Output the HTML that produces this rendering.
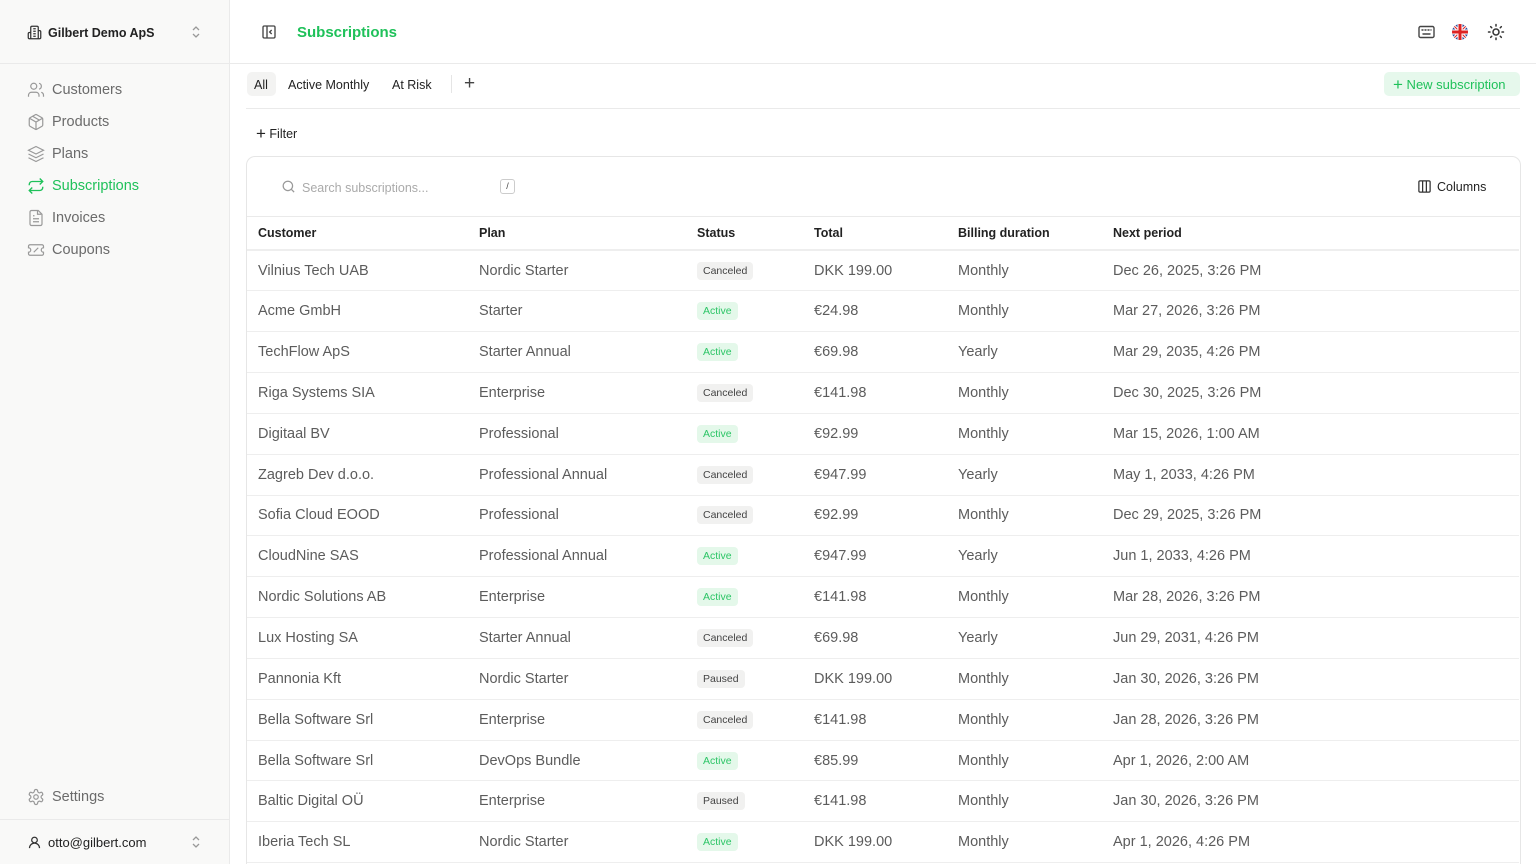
<!DOCTYPE html>
<html><head><meta charset="utf-8"><style>
*{box-sizing:border-box;margin:0;padding:0}
html,body{width:1536px;height:864px;overflow:hidden}
body{font-family:"Liberation Sans",sans-serif;background:#fff;color:#333}
#w{position:relative;width:1536px;height:864px;overflow:hidden}
.sb{position:absolute;left:0;top:0;width:230px;height:864px;background:#f9f9f8;border-right:1px solid #eaeaea}
.abs{position:absolute}
.nav{position:absolute;left:27px;display:flex;align-items:center;font-size:14.5px;color:#6b6b6b}
.nav svg{margin-right:7px}
.hr{position:absolute;height:1px;background:#eaeaea}
.g{color:#1fc15a}
table{border-collapse:collapse;position:absolute;left:247px;top:217px;width:1272px;font-size:14.5px;color:#5c5c5c}
th{font-weight:bold;font-size:12.5px;color:#222;text-align:left;height:33px;padding-left:11px;border-bottom:2px solid #eee}
td{height:40.85px;padding-left:11px;border-bottom:1px solid #eee;white-space:nowrap}
.b{display:inline-block;font-size:10.5px;padding:3px 6px;border-radius:4px;background:#f1f1f0;color:#444}
.a{background:#e4f8ea;color:#2cc566}
</style></head><body><div id="w">
<div class="sb">
 <div class="abs" style="left:27px;top:25px;display:flex;align-items:center;font-size:12.5px;font-weight:bold;color:#222">
  <svg width="15" height="15" viewBox="0 0 24 24" fill="none" stroke="#333" stroke-width="2"><path d="M6 22V4a2 2 0 0 1 2-2h8a2 2 0 0 1 2 2v18ZM6 12H4a2 2 0 0 0-2 2v6a2 2 0 0 0 2 2h2M18 9h2a2 2 0 0 1 2 2v9a2 2 0 0 1-2 2h-2M10 6h4M10 10h4M10 14h4M10 18h4"/></svg>
  <span style="margin-left:6px">Gilbert Demo ApS</span></div>
 <svg class="abs" style="left:190px;top:25px" width="12" height="14" viewBox="0 0 12 14" fill="none" stroke="#999" stroke-width="1.3"><path d="M3 5l3-3 3 3M3 9l3 3 3-3"/></svg>
 <div class="hr" style="left:0;top:63px;width:230px"></div>
 <div class="nav" style="top:81px"><svg width="18" height="18" viewBox="0 0 24 24" fill="none" stroke="#999" stroke-width="1.6"><circle cx="9" cy="7" r="4"/><path d="M2 21v-2a4 4 0 0 1 4-4h6a4 4 0 0 1 4 4v2M16 3.1a4 4 0 0 1 0 7.8M22 21v-2a4 4 0 0 0-3-3.9"/></svg>Customers</div>
 <div class="nav" style="top:113px"><svg width="18" height="18" viewBox="0 0 24 24" fill="none" stroke="#999" stroke-width="1.6"><path d="M21 8a2 2 0 0 0-1-1.7l-7-4a2 2 0 0 0-2 0l-7 4A2 2 0 0 0 3 8v8a2 2 0 0 0 1 1.7l7 4a2 2 0 0 0 2 0l7-4a2 2 0 0 0 1-1.7ZM3.3 7 12 12l8.7-5M12 22V12M7.5 4.3l9 5.2"/></svg>Products</div>
 <div class="nav" style="top:145px"><svg width="18" height="18" viewBox="0 0 24 24" fill="none" stroke="#999" stroke-width="1.6"><path d="M12 2 2 7l10 5 10-5zM2 12l10 5 10-5M2 17l10 5 10-5"/></svg>Plans</div>
 <div class="nav g" style="top:177px;color:#1fc15a"><svg width="18" height="18" viewBox="0 0 24 24" fill="none" stroke="#1fc15a" stroke-width="1.8"><path d="m17 2 4 4-4 4M3 11v-1a4 4 0 0 1 4-4h14M7 22l-4-4 4-4M21 13v1a4 4 0 0 1-4 4H3"/></svg>Subscriptions</div>
 <div class="nav" style="top:209px"><svg width="18" height="18" viewBox="0 0 24 24" fill="none" stroke="#999" stroke-width="1.6"><path d="M15 2H6a2 2 0 0 0-2 2v16a2 2 0 0 0 2 2h12a2 2 0 0 0 2-2V7zM14 2v5h5M8 13h8M8 17h8M8 9h2"/></svg>Invoices</div>
 <div class="nav" style="top:241px"><svg width="18" height="18" viewBox="0 0 24 24" fill="none" stroke="#999" stroke-width="1.6"><path d="M2 9a3 3 0 0 1 0 6v2a2 2 0 0 0 2 2h16a2 2 0 0 0 2-2v-2a3 3 0 0 1 0-6V7a2 2 0 0 0-2-2H4a2 2 0 0 0-2 2ZM9 9h.01M15 9l-6 6M15 15h.01"/></svg>Coupons</div>
 <div class="nav" style="top:788px"><svg width="18" height="18" viewBox="0 0 24 24" fill="none" stroke="#999" stroke-width="1.6"><path d="M12.2 2h-.4a2 2 0 0 0-2 2v.2a2 2 0 0 1-1 1.7l-.4.3a2 2 0 0 1-2 0l-.2-.1a2 2 0 0 0-2.7.7l-.2.4a2 2 0 0 0 .7 2.7l.2.1a2 2 0 0 1 1 1.7v.5a2 2 0 0 1-1 1.8l-.2.1a2 2 0 0 0-.7 2.7l.2.4a2 2 0 0 0 2.7.7l.2-.1a2 2 0 0 1 2 0l.4.3a2 2 0 0 1 1 1.7v.2a2 2 0 0 0 2 2h.4a2 2 0 0 0 2-2v-.2a2 2 0 0 1 1-1.7l.4-.3a2 2 0 0 1 2 0l.2.1a2 2 0 0 0 2.7-.7l.2-.4a2 2 0 0 0-.7-2.7l-.2-.1a2 2 0 0 1-1-1.8v-.5a2 2 0 0 1 1-1.7l.2-.1a2 2 0 0 0 .7-2.7l-.2-.4a2 2 0 0 0-2.7-.7l-.2.1a2 2 0 0 1-2 0l-.4-.3a2 2 0 0 1-1-1.7V4a2 2 0 0 0-2-2z"/><circle cx="12" cy="12" r="3"/></svg>Settings</div>
 <div class="hr" style="left:0;top:819px;width:230px"></div>
 <div class="abs" style="left:27px;top:835px;display:flex;align-items:center;font-size:13px;color:#222">
  <svg width="15" height="15" viewBox="0 0 24 24" fill="none" stroke="#333" stroke-width="2"><circle cx="12" cy="8" r="4.5"/><path d="M4 21a8 8 0 0 1 16 0"/></svg><span style="margin-left:6px">otto@gilbert.com</span></div>
 <svg class="abs" style="left:190px;top:835px" width="12" height="14" viewBox="0 0 12 14" fill="none" stroke="#999" stroke-width="1.3"><path d="M3 5l3-3 3 3M3 9l3 3 3-3"/></svg>
</div>
<svg class="abs" style="left:261px;top:24px" width="16" height="16" viewBox="0 0 24 24" fill="none" stroke="#444" stroke-width="2"><rect x="3" y="3" width="18" height="18" rx="2"/><path d="M9 3v18M16 15l-3-3 3-3"/></svg>
<div class="abs g" style="left:297px;top:24px;font-size:15px;font-weight:bold">Subscriptions</div>
<svg class="abs" style="left:1418px;top:25px" width="17" height="14" viewBox="0 0 17 14" fill="none" stroke="#444" stroke-width="1.4"><rect x="1" y="1.5" width="15" height="11" rx="1.5"/><path d="M4 5h1M7 5h1M10 5h1M13 5h0M5 9h7" stroke-linecap="round"/></svg>
<svg class="abs" style="left:1452px;top:24px" width="16" height="16" viewBox="0 0 16 16"><clipPath id="c"><circle cx="8" cy="8" r="8"/></clipPath><g clip-path="url(#c)"><rect width="16" height="16" fill="#2a4a9a"/><path d="M0 0L16 16M16 0L0 16" stroke="#fff" stroke-width="3"/><path d="M0 0L16 16M16 0L0 16" stroke="#d22" stroke-width="1"/><path d="M8 0v16M0 8h16" stroke="#fff" stroke-width="5"/><path d="M8 0v16M0 8h16" stroke="#d22" stroke-width="3"/></g></svg>
<svg class="abs" style="left:1487px;top:23px" width="18" height="18" viewBox="0 0 24 24" fill="none" stroke="#333" stroke-width="2" stroke-linecap="round"><circle cx="12" cy="12" r="4"/><path d="M12 2v2M12 20v2M4.9 4.9l1.4 1.4M17.7 17.7l1.4 1.4M2 12h2M20 12h2M6.3 17.7l-1.4 1.4M19.1 4.9l-1.4 1.4"/></svg>
<div class="hr" style="left:230px;top:63px;width:1306px"></div>
<div class="abs" style="left:247px;top:72px;width:29px;height:24px;background:#f3f3f2;border-radius:5px"></div>
<div class="abs" style="left:254px;top:78px;font-size:12.5px;color:#222">All</div>
<div class="abs" style="left:288px;top:78px;font-size:12.5px;color:#222">Active Monthly</div>
<div class="abs" style="left:392px;top:78px;font-size:12.5px;color:#222">At Risk</div>
<div class="abs" style="left:451px;top:75px;width:1px;height:18px;background:#e5e5e5"></div>
<div class="abs" style="left:464px;top:73px;font-size:19px;color:#444">+</div>
<div class="abs" style="left:1384px;top:72px;width:136px;height:24px;background:#e6f8ec;border-radius:5px;color:#1fc15a;font-size:13px;padding:5px 0 0 9px"><span style="font-size:17px;line-height:13px;vertical-align:-1px">+</span> New subscription</div>
<div class="hr" style="left:246px;top:108px;width:1274px"></div>
<div class="abs" style="left:256px;top:124px;font-size:12.5px;color:#222"><span style="font-size:17px;vertical-align:-1px">+</span> Filter</div>
<div class="abs" style="left:246px;top:156px;width:1275px;height:708px;border:1px solid #e6e6e6;border-bottom:none;border-radius:9px 9px 0 0"></div>
<svg class="abs" style="left:281px;top:179px" width="15" height="15" viewBox="0 0 24 24" fill="none" stroke="#999" stroke-width="2"><circle cx="11" cy="11" r="7.5"/><path d="m21 21-4.3-4.3"/></svg>
<div class="abs" style="left:302px;top:181px;font-size:12.5px;color:#aaa">Search subscriptions...</div>
<div class="abs" style="left:500px;top:179px;width:15px;height:15px;border:1px solid #ccc;border-radius:3px;font-size:9px;text-align:center;line-height:13px;color:#444">/</div>
<svg class="abs" style="left:1417px;top:179px" width="15" height="15" viewBox="0 0 24 24" fill="none" stroke="#333" stroke-width="2"><rect x="3" y="3" width="18" height="18" rx="2"/><path d="M9 3v18M15 3v18"/></svg>
<div class="abs" style="left:1437px;top:180px;font-size:12.5px;color:#222">Columns</div>
<div class="hr" style="left:247px;top:216px;width:1273px"></div>
<table>
<tr><th style="width:221px">Customer</th><th style="width:218px">Plan</th><th style="width:117px">Status</th><th style="width:144px">Total</th><th style="width:155px">Billing duration</th><th>Next period</th></tr>
<tr><td>Vilnius Tech UAB</td><td>Nordic Starter</td><td><span class="b">Canceled</span></td><td>DKK 199.00</td><td>Monthly</td><td>Dec 26, 2025, 3:26 PM</td></tr>
<tr><td>Acme GmbH</td><td>Starter</td><td><span class="b a">Active</span></td><td>€24.98</td><td>Monthly</td><td>Mar 27, 2026, 3:26 PM</td></tr>
<tr><td>TechFlow ApS</td><td>Starter Annual</td><td><span class="b a">Active</span></td><td>€69.98</td><td>Yearly</td><td>Mar 29, 2035, 4:26 PM</td></tr>
<tr><td>Riga Systems SIA</td><td>Enterprise</td><td><span class="b">Canceled</span></td><td>€141.98</td><td>Monthly</td><td>Dec 30, 2025, 3:26 PM</td></tr>
<tr><td>Digitaal BV</td><td>Professional</td><td><span class="b a">Active</span></td><td>€92.99</td><td>Monthly</td><td>Mar 15, 2026, 1:00 AM</td></tr>
<tr><td>Zagreb Dev d.o.o.</td><td>Professional Annual</td><td><span class="b">Canceled</span></td><td>€947.99</td><td>Yearly</td><td>May 1, 2033, 4:26 PM</td></tr>
<tr><td>Sofia Cloud EOOD</td><td>Professional</td><td><span class="b">Canceled</span></td><td>€92.99</td><td>Monthly</td><td>Dec 29, 2025, 3:26 PM</td></tr>
<tr><td>CloudNine SAS</td><td>Professional Annual</td><td><span class="b a">Active</span></td><td>€947.99</td><td>Yearly</td><td>Jun 1, 2033, 4:26 PM</td></tr>
<tr><td>Nordic Solutions AB</td><td>Enterprise</td><td><span class="b a">Active</span></td><td>€141.98</td><td>Monthly</td><td>Mar 28, 2026, 3:26 PM</td></tr>
<tr><td>Lux Hosting SA</td><td>Starter Annual</td><td><span class="b">Canceled</span></td><td>€69.98</td><td>Yearly</td><td>Jun 29, 2031, 4:26 PM</td></tr>
<tr><td>Pannonia Kft</td><td>Nordic Starter</td><td><span class="b">Paused</span></td><td>DKK 199.00</td><td>Monthly</td><td>Jan 30, 2026, 3:26 PM</td></tr>
<tr><td>Bella Software Srl</td><td>Enterprise</td><td><span class="b">Canceled</span></td><td>€141.98</td><td>Monthly</td><td>Jan 28, 2026, 3:26 PM</td></tr>
<tr><td>Bella Software Srl</td><td>DevOps Bundle</td><td><span class="b a">Active</span></td><td>€85.99</td><td>Monthly</td><td>Apr 1, 2026, 2:00 AM</td></tr>
<tr><td>Baltic Digital OÜ</td><td>Enterprise</td><td><span class="b">Paused</span></td><td>€141.98</td><td>Monthly</td><td>Jan 30, 2026, 3:26 PM</td></tr>
<tr><td>Iberia Tech SL</td><td>Nordic Starter</td><td><span class="b a">Active</span></td><td>DKK 199.00</td><td>Monthly</td><td>Apr 1, 2026, 4:26 PM</td></tr>
</table>
</div></body></html>
